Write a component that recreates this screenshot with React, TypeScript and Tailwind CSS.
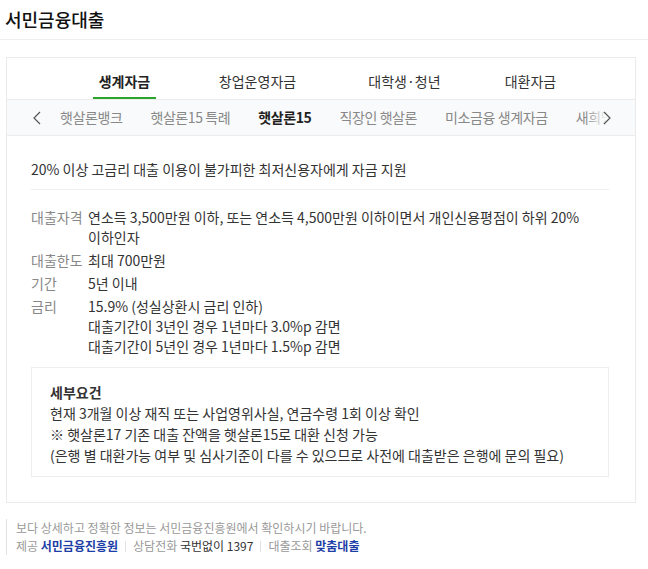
const mainTabs = [
  { label: '생계자금', width: 'w-[127px]', active: true },
  { label: '창업운영자금', width: 'w-[139px]', active: false },
  { label: '대학생·청년', width: 'w-[155px]', active: false },
  { label: '대환자금', width: 'w-[97px]', active: false },
]

const subTabs = ['햇살론뱅크', '햇살론15 특례', '햇살론15', '직장인 햇살론', '미소금융 생계자금', '새희망홀씨']

function Chevron({ dir }: { dir: 'left' | 'right' }) {
  return (
    <svg width="8" height="14" viewBox="0 0 8 14" fill="none">
      <polyline
        points={dir === 'left' ? '7,1 1,7 7,13' : '1,1 7,7 1,13'}
        stroke="#555"
        strokeWidth="1.2"
      />
    </svg>
  )
}

function Row({ label, children }: { label: string; children: React.ReactNode }) {
  return (
    <div className="flex">
      <div className="w-[57px] shrink-0 text-[#888]">{label}</div>
      <div className="max-w-[500px] flex-1 text-[#333]">{children}</div>
    </div>
  )
}

function Sep() {
  return <span className="mx-[7px] inline-block h-[11px] w-px bg-[#e2e2e2] align-[-1px]" />
}

export default function App() {
  return (
    <div className="h-[569px] w-[648px] bg-white font-['Noto_Sans_CJK_KR',sans-serif] text-[#333]">
      {/* header */}
      <div className="flex h-[40px] items-center border-b border-[#eeeeee] pl-[5px]">
        <h1 className="text-[18px] font-medium text-[#111]">서민금융대출</h1>
      </div>

      {/* card */}
      <div className="ml-[6px] mt-[17px] w-[630px] border border-[#ebebeb]">
        {/* main tabs */}
        <div className="flex h-[41px] items-end pl-[54px]">
          {mainTabs.map((t) => (
            <div key={t.label} className={`${t.width} flex justify-center`}>
              <span
                className={`px-[6px] pb-[6px] text-[14px] leading-[20px] border-b-2 ${
                  t.active ? 'border-[#2aa52a] font-bold text-[#222]' : 'border-transparent text-[#333]'
                }`}
              >
                {t.label}
              </span>
            </div>
          ))}
        </div>

        {/* sub tabs */}
        <div className="relative flex h-[37px] items-center overflow-hidden border-y border-[#ececec] bg-[#f9fafb]">
          <div className="flex gap-[28px] whitespace-nowrap pl-[53px] text-[14px] tracking-[-0.4px] text-[#888]">
            {subTabs.map((s) => (
              <span key={s} className={s === '햇살론15' ? 'font-bold text-[#222]' : ''}>
                {s}
              </span>
            ))}
          </div>
          <div className="absolute left-0 top-0 flex h-full w-[44px] items-center justify-end bg-[#f9fafb] pr-[10px]">
            <Chevron dir="left" />
          </div>
          <div className="absolute right-0 top-0 flex h-full w-[50px] items-center bg-gradient-to-r from-[#f9fafb]/0 from-0% to-[#f9fafb] to-45% pl-[18px]">
            <Chevron dir="right" />
          </div>
        </div>

        {/* body */}
        <div className="pb-[25px] pl-[24px] pr-[26px] text-[14px] leading-[20px]">
          <p className="border-b border-[#efefef] pb-[10px] pt-[23px] text-[#333]">
            20% 이상 고금리 대출 이용이 불가피한 최저신용자에게 자금 지원
          </p>

          <div className="mt-[17px] flex flex-col gap-[3px]">
            <Row label="대출자격">
              연소득 3,500만원 이하, 또는 연소득 4,500만원 이하이면서 개인신용평점이 하위 20% 이하인자
            </Row>
            <Row label="대출한도">최대 700만원</Row>
            <Row label="기간">5년 이내</Row>
            <Row label="금리">
              <div>15.9% (성실상환시 금리 인하)</div>
              <div>대출기간이 3년인 경우 1년마다 3.0%p 감면</div>
              <div>대출기간이 5년인 경우 1년마다 1.5%p 감면</div>
            </Row>
          </div>

          <div className="mt-[11px] border border-[#eeeeee] pb-[10px] pl-[18px] pt-[14px] leading-[21px] text-[#333]">
            <div className="font-bold">세부요건</div>
            <div>현재 3개월 이상 재직 또는 사업영위사실, 연금수령 1회 이상 확인</div>
            <div>※ 햇살론17 기존 대출 잔액을 햇살론15로 대환 신청 가능</div>
            <div>(은행 별 대환가능 여부 및 심사기준이 다를 수 있으므로 사전에 대출받은 은행에 문의 필요)</div>
          </div>
        </div>
      </div>

      {/* footer */}
      <div className="ml-[6px] mt-[16px] border-l border-[#e2e2e2] pl-[9px] text-[12px] leading-[18px] text-[#999]">
        <div>보다 상세하고 정확한 정보는 서민금융진흥원에서 확인하시기 바랍니다.</div>
        <div>
          제공 <span className="font-bold text-[#1c3ea6]">서민금융진흥원</span>
          <Sep />
          상담전화 <span className="text-[#333]">국번없이 1397</span>
          <Sep />
          대출조회 <span className="font-bold text-[#1c3ea6]">맞춤대출</span>
        </div>
      </div>
    </div>
  )
}
